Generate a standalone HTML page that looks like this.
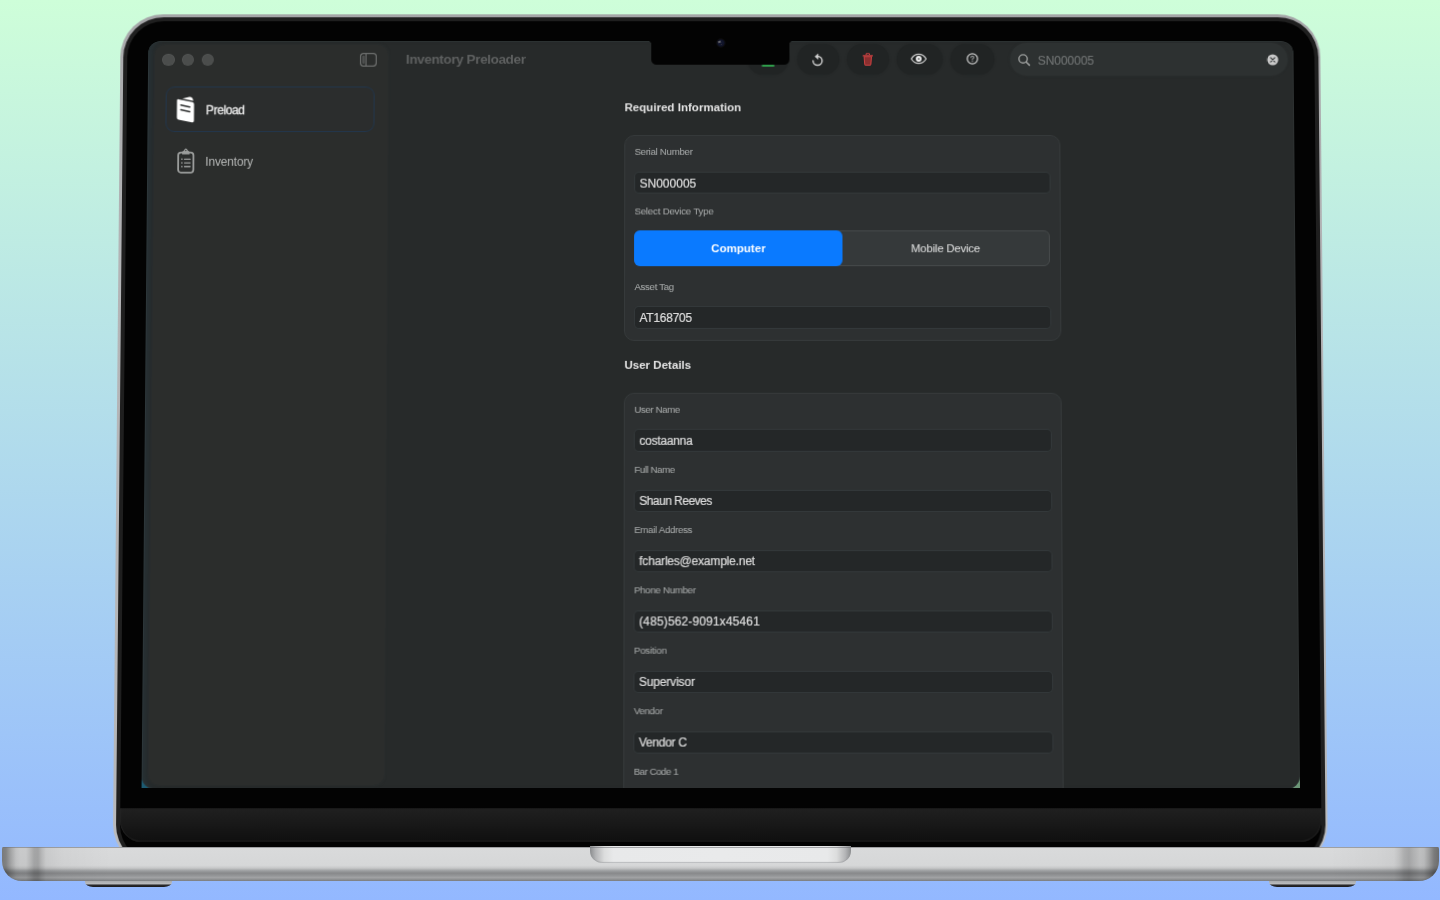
<!DOCTYPE html>
<html><head><meta charset="utf-8"><title>Inventory Preloader</title>
<style>
html,body{margin:0;padding:0;overflow:hidden}
html{width:1440px;height:900px}
body{width:1440px;height:900px;overflow:hidden;position:relative;background:linear-gradient(180deg,#cefed9 0%,#93b8ff 100%);font-family:"Liberation Sans",sans-serif;}
.b{position:absolute;display:block}
.t{position:absolute;white-space:nowrap;font-family:"Liberation Sans",sans-serif}
#plane{position:absolute;left:0;top:0;width:1440px;height:900px;transform-origin:0 0;transform:matrix3d(0.9933869376,-3.353703605e-18,0,3.410519611e-20,-0.01120522488,0.9872287373,0,-1.541120151e-05,0,0,1,0,4.620730444,0.4942618902,0,1);}
#lid{position:absolute;left:117.4px;top:14.3px;width:1207px;height:853px;border-radius:43px;background:linear-gradient(180deg,#a4a5a7 0,#a9aaac 4%,#b3b4b6 30%,#b6b7b9 90%,#bcbdbf 100%);}
#lid2{position:absolute;left:2.8px;top:2.3px;right:2.8px;bottom:2.3px;border-radius:40.5px;background:#1f1f1f;}
#lid3{position:absolute;left:6.9px;top:6.3px;right:6.9px;bottom:6.3px;border-radius:36.5px;background:#030303;}
#chin{position:absolute;left:6.9px;right:6.9px;top:793.9px;height:32.6px;border-radius:0 0 21px 21px;background:linear-gradient(180deg,#202020 0,#181818 50%,#0f0f0f 100%);box-shadow:inset 0 -0.8px 0 0 rgba(52,52,52,0.55), inset 0.8px 0 0 0 rgba(44,44,44,0.5), inset -0.8px 0 0 0 rgba(44,44,44,0.5)}
#screen{position:absolute;left:144.80px;top:40.70px;width:1152px;height:747.3px;border-radius:12px 12px 0 0;overflow:hidden;background:#030303}
#base{position:absolute;left:2.1px;top:846.6px;width:1436.8px;height:34.8px;border-radius:1.5px 1.5px 20px 20px / 1.5px 1.5px 20px 20px;overflow:hidden;
 background:linear-gradient(180deg,#dcdddd 0,#d9dadb 4%,#d6d7d8 54%,#c6c7c8 62%,#9c9ea0 70%,#88898b 77%,#939597 84%,#a1a2a4 90%,#8f9193 95%,#7b7d7f 100%);}
#base:after{content:"";position:absolute;left:0;right:0;top:0;bottom:0;background:
 linear-gradient(90deg,rgba(0,0,0,0.44) 0,rgba(0,0,0,0.40) 4px,rgba(0,0,0,0.24) 9px,rgba(0,0,0,0.11) 14px,rgba(0,0,0,0.075) 18px,rgba(0,0,0,0.075) 24px,rgba(0,0,0,0.15) 28px,rgba(0,0,0,0.24) 32px,rgba(0,0,0,0.25) 36px,rgba(0,0,0,0.15) 40px,rgba(0,0,0,0.07) 44px,rgba(0,0,0,0.03) 60px,rgba(0,0,0,0) 110px,
 rgba(0,0,0,0) calc(100% - 110px),rgba(0,0,0,0.03) calc(100% - 60px),rgba(0,0,0,0.05) calc(100% - 45px),rgba(0,0,0,0.11) calc(100% - 40px),rgba(0,0,0,0.2) calc(100% - 35px),rgba(0,0,0,0.24) calc(100% - 30px),rgba(0,0,0,0.18) calc(100% - 25px),rgba(0,0,0,0.12) calc(100% - 19px),rgba(0,0,0,0.14) calc(100% - 15px),rgba(0,0,0,0.27) calc(100% - 10px),rgba(0,0,0,0.43) calc(100% - 5px),rgba(0,0,0,0.5) 100%)}
#base:before{content:"";position:absolute;left:0;right:0;top:0;height:0.7px;background:rgba(110,112,116,0.55);z-index:2}
#groove{position:absolute;left:590px;top:846.4px;width:261px;height:17px;border-radius:0 0 13px 13px / 0 0 12px 12px;background:linear-gradient(90deg,#8b8d8f 0,#b4b5b7 2.2%,#dcdddd 5.5%,#e8e9ea 9%,#e9eaeb 50%,#e8e9ea 91%,#dcdddd 94.5%,#b4b5b7 97.8%,#8b8d8f 100%);box-shadow:inset 0 -1px 1px rgba(150,152,155,0.55)}
.foot{position:absolute;top:881px;height:5.6px;background:linear-gradient(180deg,#a9abad 0,#b9bbbd 45%,#2a2a2c 70%,#1b1b1d 100%);border-radius:0 0 8px 8px / 0 0 5px 5px}
</style></head>
<body>
<div id="plane">
 <div id="lid"><div id="lid2"></div><div id="lid3"></div><div id="chin"></div></div>
 <div id="screen">
<div class="b" style="left:0;bottom:0;width:14px;height:14px;background:#1d5b72"></div>
<div class="b" style="right:0;bottom:0;width:14px;height:14px;background:#6c9677"></div>
<div class="b" id="win" style="left:0;top:0;width:1152px;height:748.4px;background:#272a2a;border-radius:12px 12px 12.5px 12.5px;box-shadow:inset 0 0 0 0.8px rgba(90,105,108,0.16), inset 8px 0 6px -4px rgba(39,50,54,0.9)"></div>
<div class="b" id="side" style="left:7px;top:4.5px;width:234px;height:739.5px;background:#2b2d2c;border-radius:10px;box-shadow:0 0 2px 1px rgba(43,46,46,0.8)"></div>
<div class="b" style="left:14.60px;top:12.90px;width:12.2px;height:12.2px;border-radius:50%;background:#4b4d4c;box-shadow:inset 0 0 0 0.7px rgba(255,255,255,0.06)"></div>
<div class="b" style="left:34.50px;top:12.90px;width:12.2px;height:12.2px;border-radius:50%;background:#4b4d4c;box-shadow:inset 0 0 0 0.7px rgba(255,255,255,0.06)"></div>
<div class="b" style="left:54.10px;top:12.90px;width:12.2px;height:12.2px;border-radius:50%;background:#4b4d4c;box-shadow:inset 0 0 0 0.7px rgba(255,255,255,0.06)"></div>
<svg class="b" style="left:212.4px;top:11.4px" width="20" height="17" viewBox="0 0 20 17"><rect x="1.6" y="1.6" width="15.8" height="12.7" rx="3" fill="none" stroke="#6c6e6d" stroke-width="1.25"/><line x1="7.1" y1="1.6" x2="7.1" y2="14.3" stroke="#6c6e6d" stroke-width="1.2"/><rect x="3.3" y="3.7" width="2.5" height="8.4" rx="1" fill="#4f5150"/></svg>
<div class="b" style="left:18.70px;top:46.80px;width:209.70px;height:45.40px;border:1px solid #22364c;border-radius:9px;box-sizing:border-box;background:#2b2d2d"></div>
<svg class="b" style="left:27px;top:54px" width="22" height="30" viewBox="0 0 22 30">
<path d="M7.6 4.3 L14.8 2.5 Q17.2 2.0 18.1 4.2 L18.9 6.6 L7.6 4.3Z" fill="#fff"/>
<path d="M4.0 4.9 L17.9 7.8 Q19.6 8.2 19.6 10 L19.6 26.6 Q19.6 28.6 17.7 28.2 L4.0 25.4 Q2.4 25 2.4 23.3 L2.4 6.3 Q2.4 4.6 4.0 4.9Z" fill="#fff"/>
<path d="M6.3 10.7 L15.3 12.7 M6.3 15.4 L15.3 17.4" stroke="#2b2d2d" stroke-width="1.5" stroke-linecap="round"/>
</svg>
<div class="t" style="left:58.80px;top:64.67px;font-size:12.2px;line-height:12.2px;color:#ececec;letter-spacing:-0.450px;-webkit-text-stroke:0.3px #ececec;">Preload</div>
<svg class="b" style="left:28.6px;top:105.7px" width="22" height="32" viewBox="0 0 22 32">
<rect x="3.1" y="7.6" width="15.3" height="20.2" rx="2.8" fill="none" stroke="#9b9d9c" stroke-width="1.8"/>
<path d="M7 9.6 L7 7.6 Q7 6.4 8.4 6 L9.6 4.2 Q10.7 2.7 11.9 4.2 L13.1 6 Q14.5 6.4 14.5 7.6 L14.5 9.6 Z" fill="#9b9d9c"/>
<circle cx="10.75" cy="5.6" r="0.7" fill="#2b2d2c"/>
<g fill="#9b9d9c"><rect x="6.1" y="13.6" width="1.5" height="1.5" rx="0.5"/><rect x="8.9" y="13.7" width="6.8" height="1.3" rx="0.6"/>
<rect x="6.1" y="17.3" width="1.5" height="1.5" rx="0.5"/><rect x="8.9" y="17.4" width="6.8" height="1.3" rx="0.6"/>
<rect x="6.1" y="21" width="1.5" height="1.5" rx="0.5"/><rect x="8.9" y="21.1" width="6.8" height="1.3" rx="0.6"/></g>
</svg>
<div class="t" style="left:58.50px;top:116.14px;font-size:12.0px;line-height:12.0px;color:#b4b6b5;letter-spacing:-0.162px;">Inventory</div>
<div class="t" style="left:259.50px;top:11.99px;font-size:13.6px;line-height:13.6px;color:#5e6060;font-weight:bold;letter-spacing:-0.391px;">Inventory Preloader</div>
<div class="b" style="left:602.80px;top:3.00px;width:41.50px;height:31.80px;background:#212424;border-radius:17px;box-shadow:0 0 1.5px 0.5px #232626;"></div>
<div class="b" style="left:617.40px;top:24.60px;width:12.60px;height:2.00px;background:#2f9e4b;border-radius:1px"></div>
<div class="b" style="left:653.00px;top:3.00px;width:41.80px;height:31.80px;background:#212424;border-radius:17px;box-shadow:0 0 1.5px 0.5px #232626;"></div>
<div class="b" style="left:702.90px;top:3.00px;width:42.70px;height:31.80px;background:#212424;border-radius:17px;box-shadow:0 0 1.5px 0.5px #232626;"></div>
<div class="b" style="left:753.70px;top:3.00px;width:45.70px;height:31.80px;background:#212424;border-radius:17px;box-shadow:0 0 1.5px 0.5px #232626;"></div>
<div class="b" style="left:807.50px;top:3.00px;width:43.70px;height:31.80px;background:#212424;border-radius:17px;box-shadow:0 0 1.5px 0.5px #232626;"></div>
<svg class="b" style="left:664.9px;top:9.5px" width="18" height="20" viewBox="0 0 18 20">
<path d="M8.3 6.45 A4.55 4.55 0 1 1 3.75 11" fill="none" stroke="#cdcdcd" stroke-width="1.45" stroke-linecap="round"/>
<path d="M8.8 4.0 L5.7 6.7 L8.8 9.4 Z" fill="#d4d4d4" stroke="#d4d4d4" stroke-width="0.5" stroke-linejoin="round"/>
</svg>
<svg class="b" style="left:715.2px;top:9.5px" width="18" height="20" viewBox="0 0 18 20">
<g transform="translate(8.8 9.6) scale(0.86) translate(-9 -9.45)"><path d="M7 4.2 L7 3.4 Q7 2.6 7.8 2.6 L10.2 2.6 Q11 2.6 11 3.4 L11 4.2" fill="none" stroke="#cc4141" stroke-width="1.2"/>
<path d="M3.6 5.2 L14.4 5.2" stroke="#cc4141" stroke-width="1.5" stroke-linecap="round"/>
<path d="M4.7 6.2 L5.4 15.2 Q5.5 16.3 6.6 16.3 L11.4 16.3 Q12.5 16.3 12.6 15.2 L13.3 6.2 Z" fill="#8a2f2f" stroke="#cc4141" stroke-width="1.2" stroke-linejoin="round"/></g>
</svg>
<svg class="b" style="left:764.7px;top:9.5px" width="22" height="18" viewBox="0 0 22 18">
<path d="M3.6 9 C5.4 5.7 8 4.3 11 4.3 C14 4.3 16.6 5.7 18.4 9 C16.6 12.3 14 13.7 11 13.7 C8 13.7 5.4 12.3 3.6 9 Z" fill="none" stroke="#c9c9c9" stroke-width="1.3" stroke-linejoin="round"/>
<circle cx="11" cy="9" r="2.9" fill="#f0f0f0"/><circle cx="11" cy="9" r="0.85" fill="#2c2f2f"/>
</svg>
<svg class="b" style="left:820.6px;top:9.3px" width="18" height="18" viewBox="0 0 18 18">
<circle cx="9" cy="9" r="5.15" fill="none" stroke="#cfcfcf" stroke-width="1.25"/>
<path d="M7.5 7.7 Q7.6 6.3 9 6.3 Q10.5 6.3 10.5 7.5 Q10.5 8.3 9.6 8.8 Q9 9.2 9 9.9" fill="none" stroke="#8f9191" stroke-width="1.15" stroke-linecap="round"/>
<circle cx="9" cy="11.5" r="0.7" fill="#8f9191"/>
</svg>
<div class="b" style="left:867.30px;top:2.60px;width:279.40px;height:32.80px;background:#2d3131;border-radius:17px;box-shadow:0 0 1.5px 0.5px #2a2e2e;"></div>
<svg class="b" style="left:872.5px;top:10.4px" width="18" height="18" viewBox="0 0 18 18">
<circle cx="8" cy="8.1" r="4.2" fill="none" stroke="#9c9e9d" stroke-width="1.4"/><path d="M11.1 11.2 L14.3 14.4" stroke="#9c9e9d" stroke-width="1.6" stroke-linecap="round"/></svg>
<div class="t" style="left:894.90px;top:13.84px;font-size:12.0px;line-height:12.0px;color:#6d7070;letter-spacing:-0.027px;-webkit-text-stroke:0.2px #6d7070;">SN000005</div>
<svg class="b" style="left:1124.2px;top:12.5px" width="14" height="14" viewBox="0 0 14 14">
<circle cx="7" cy="7" r="5.6" fill="#c9c9c9"/><path d="M4.9 4.9 L9.1 9.1 M9.1 4.9 L4.9 9.1" stroke="#343838" stroke-width="1.15" stroke-linecap="round"/></svg>
<div class="t" style="left:479.40px;top:61.48px;font-size:11.6px;line-height:11.6px;color:#e4e4e4;font-weight:bold;">Required Information</div>
<div class="b" style="left:479.20px;top:95.20px;width:437.70px;height:207.10px;background:#2d3031;border:1px solid #363a3b;border-radius:10px;box-sizing:border-box;"></div>
<div class="t" style="left:489.60px;top:107.29px;font-size:9.7px;line-height:9.7px;color:#a0a3a3;letter-spacing:-0.284px;-webkit-text-stroke:0.1px #a0a3a3;">Serial Number</div>
<div class="b" style="left:490.00px;top:133.10px;width:416.20px;height:20.60px;background:#242728;border-radius:4px;box-shadow:0 0 0 1px #33383a;"></div>
<div class="t" style="left:494.70px;top:138.04px;font-size:12.0px;line-height:12.0px;color:#dddddd;letter-spacing:0.011px;-webkit-text-stroke:0.22px #dddddd;">SN000005</div>
<div class="t" style="left:489.60px;top:167.59px;font-size:9.7px;line-height:9.7px;color:#a0a3a3;letter-spacing:-0.197px;-webkit-text-stroke:0.1px #a0a3a3;">Select Device Type</div>
<div class="b" style="left:489.70px;top:191.00px;width:417.00px;height:35.90px;background:#35393a;border:1px solid #464a4b;border-radius:6px;box-sizing:border-box;"></div>
<div class="b" style="left:489.70px;top:191.00px;width:208.10px;height:35.90px;background:#0a7aff;border-radius:6px;"></div>
<div class="t" style="left:566.50px;top:203.87px;font-size:11.5px;line-height:11.5px;color:#ffffff;font-weight:bold;letter-spacing:0.037px;">Computer</div>
<div class="t" style="left:767.00px;top:203.95px;font-size:11.4px;line-height:11.4px;color:#d8d9d9;letter-spacing:-0.177px;-webkit-text-stroke:0.1px #d8d9d9;">Mobile Device</div>
<div class="t" style="left:489.60px;top:243.09px;font-size:9.7px;line-height:9.7px;color:#a0a3a3;letter-spacing:-0.313px;-webkit-text-stroke:0.1px #a0a3a3;">Asset Tag</div>
<div class="b" style="left:490.00px;top:268.30px;width:416.20px;height:21.10px;background:#242728;border-radius:4px;box-shadow:0 0 0 1px #33383a;"></div>
<div class="t" style="left:494.70px;top:273.24px;font-size:12.0px;line-height:12.0px;color:#dddddd;letter-spacing:-0.261px;-webkit-text-stroke:0.22px #dddddd;">AT168705</div>
<div class="t" style="left:479.60px;top:320.38px;font-size:11.6px;line-height:11.6px;color:#e4e4e4;font-weight:bold;letter-spacing:-0.013px;">User Details</div>
<div class="b" style="left:479.20px;top:353.90px;width:437.70px;height:406.10px;background:#2d3031;border:1px solid #363a3b;border-radius:10px;box-sizing:border-box;"></div>
<div class="t" style="left:489.60px;top:366.24px;font-size:9.7px;line-height:9.7px;color:#a0a3a3;letter-spacing:-0.372px;-webkit-text-stroke:0.1px #a0a3a3;">User Name</div>
<div class="b" style="left:490.00px;top:391.80px;width:416.20px;height:20.60px;background:#242728;border-radius:4px;box-shadow:0 0 0 1px #33383a;"></div>
<div class="t" style="left:494.70px;top:396.29px;font-size:12.0px;line-height:12.0px;color:#dddddd;letter-spacing:-0.253px;-webkit-text-stroke:0.22px #dddddd;">costaanna</div>
<div class="t" style="left:489.60px;top:426.26px;font-size:9.7px;line-height:9.7px;color:#a0a3a3;letter-spacing:-0.389px;-webkit-text-stroke:0.1px #a0a3a3;">Full Name</div>
<div class="b" style="left:490.00px;top:451.82px;width:416.20px;height:20.60px;background:#242728;border-radius:4px;box-shadow:0 0 0 1px #33383a;"></div>
<div class="t" style="left:494.70px;top:456.31px;font-size:12.0px;line-height:12.0px;color:#dddddd;letter-spacing:-0.527px;-webkit-text-stroke:0.22px #dddddd;">Shaun Reeves</div>
<div class="t" style="left:489.60px;top:486.28px;font-size:9.7px;line-height:9.7px;color:#a0a3a3;letter-spacing:-0.300px;-webkit-text-stroke:0.1px #a0a3a3;">Email Address</div>
<div class="b" style="left:490.00px;top:511.84px;width:416.20px;height:20.60px;background:#242728;border-radius:4px;box-shadow:0 0 0 1px #33383a;"></div>
<div class="t" style="left:494.70px;top:516.33px;font-size:12.0px;line-height:12.0px;color:#dddddd;letter-spacing:-0.204px;-webkit-text-stroke:0.22px #dddddd;">fcharles@example.net</div>
<div class="t" style="left:489.60px;top:546.30px;font-size:9.7px;line-height:9.7px;color:#a0a3a3;letter-spacing:-0.312px;-webkit-text-stroke:0.1px #a0a3a3;">Phone Number</div>
<div class="b" style="left:490.00px;top:571.86px;width:416.20px;height:20.60px;background:#242728;border-radius:4px;box-shadow:0 0 0 1px #33383a;"></div>
<div class="t" style="left:494.70px;top:576.35px;font-size:12.0px;line-height:12.0px;color:#dddddd;letter-spacing:0.126px;-webkit-text-stroke:0.22px #dddddd;">(485)562-9091x45461</div>
<div class="t" style="left:489.60px;top:606.32px;font-size:9.7px;line-height:9.7px;color:#a0a3a3;letter-spacing:-0.226px;-webkit-text-stroke:0.1px #a0a3a3;">Position</div>
<div class="b" style="left:490.00px;top:631.88px;width:416.20px;height:20.60px;background:#242728;border-radius:4px;box-shadow:0 0 0 1px #33383a;"></div>
<div class="t" style="left:494.70px;top:636.37px;font-size:12.0px;line-height:12.0px;color:#dddddd;letter-spacing:-0.186px;-webkit-text-stroke:0.22px #dddddd;">Supervisor</div>
<div class="t" style="left:489.60px;top:666.34px;font-size:9.7px;line-height:9.7px;color:#a0a3a3;letter-spacing:-0.341px;-webkit-text-stroke:0.1px #a0a3a3;">Vendor</div>
<div class="b" style="left:490.00px;top:691.90px;width:416.20px;height:20.60px;background:#242728;border-radius:4px;box-shadow:0 0 0 1px #33383a;"></div>
<div class="t" style="left:494.70px;top:696.39px;font-size:12.0px;line-height:12.0px;color:#dddddd;letter-spacing:-0.292px;-webkit-text-stroke:0.22px #dddddd;">Vendor C</div>
<div class="t" style="left:489.60px;top:726.36px;font-size:9.7px;line-height:9.7px;color:#a0a3a3;letter-spacing:-0.487px;-webkit-text-stroke:0.1px #a0a3a3;">Bar Code 1</div>
 </div>
 <div id="over" style="position:absolute;left:144.80px;top:40.70px;width:1152px;height:0">
<div class="b" style="left:506.50px;top:-3.00px;width:138.50px;height:27.40px;background:#030303;border-radius:0 0 5.5px 5.5px;"></div>
<div class="b" style="left:503.5px;top:0;width:3px;height:3px;background:radial-gradient(circle at 0 100%,rgba(3,3,3,0) 2.6px,#030303 3.1px)"></div>
<div class="b" style="left:645px;top:0;width:3px;height:3px;background:radial-gradient(circle at 100% 100%,rgba(3,3,3,0) 2.6px,#030303 3.1px)"></div>
<div class="b" style="left:571.2px;top:-2.7px;width:10px;height:10px;border-radius:50%;background:radial-gradient(circle,#13172e 0,#10142a 2.8px,#0c0d17 3.7px,#0b0b0c 4.2px,#080808 4.9px,#030303 5px)"></div>
<div class="b" style="left:573.7px;top:0.4px;width:2.6px;height:1.6px;border-radius:50%;background:#68686c;filter:blur(0.5px);transform:rotate(-20deg)"></div>
<div class="b" style="left:576.2px;top:3.3px;width:1.1px;height:1.1px;border-radius:50%;background:#3a3433;filter:blur(0.3px)"></div>
 </div>
</div>
<div id="base"></div>
<div id="groove"></div>
<div class="foot" style="left:85px;width:86.7px"></div>
<div class="foot" style="left:1269px;width:86.8px"></div>
</body></html>
